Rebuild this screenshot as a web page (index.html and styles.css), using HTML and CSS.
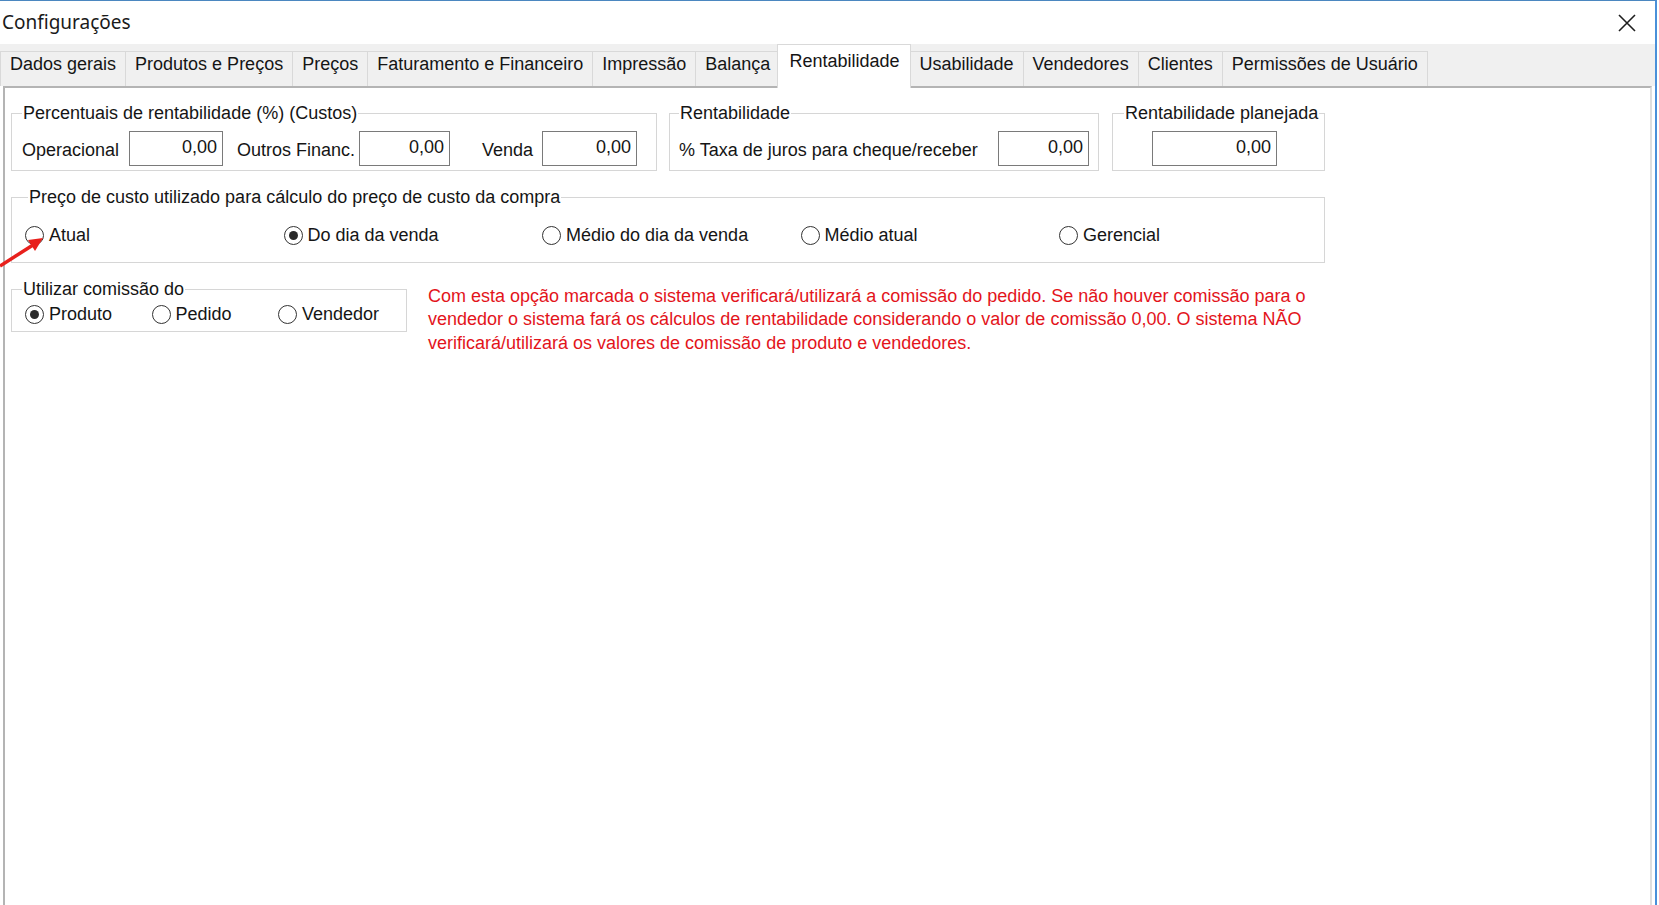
FILE: index.html
```html
<!DOCTYPE html>
<html lang="pt-BR">
<head>
    <meta charset="UTF-8">
    <title>Configurações</title>
    <link rel="stylesheet" href="styles.css">
</head>
<body>
    <div class="window">
        <header class="titlebar">
            <span class="title">Configurações</span>
            <svg class="close" width="18" height="18" viewBox="0 0 18 18">
                <path d="M1 1 L17 17 M17 1 L1 17" stroke="#1e1e1e" stroke-width="1.6" fill="none"/>
            </svg>
        </header>

        <nav class="tabs">
            <div class="tab">Dados gerais</div>
            <div class="tab">Produtos e Preços</div>
            <div class="tab">Preços</div>
            <div class="tab">Faturamento e Financeiro</div>
            <div class="tab">Impressão</div>
            <div class="tab">Balança</div>
            <div class="tab active">Rentabilidade</div>
            <div class="tab">Usabilidade</div>
            <div class="tab">Vendedores</div>
            <div class="tab">Clientes</div>
            <div class="tab">Permissões de Usuário</div>
        </nav>

        <main class="panel">
            <div class="row">
                <fieldset class="group g-custos">
                    <legend class="lg-custos">Percentuais de rentabilidade (%) (Custos)</legend>
                    <div class="fields">
                        <label class="lbl lbl-op">Operacional</label>
                        <input class="num w-op" type="text" value="0,00" readonly>
                        <label class="lbl lbl-out">Outros Financ.</label>
                        <input class="num w-out" type="text" value="0,00" readonly>
                        <label class="lbl lbl-venda">Venda</label>
                        <input class="num w-venda" type="text" value="0,00" readonly>
                    </div>
                </fieldset>

                <fieldset class="group g-rent">
                    <legend class="lg-rent">Rentabilidade</legend>
                    <div class="fields fields-rent">
                        <label class="lbl">% Taxa de juros para cheque/receber</label>
                        <input class="num w-taxa" type="text" value="0,00" readonly>
                    </div>
                </fieldset>

                <fieldset class="group g-plan">
                    <legend class="lg-plan">Rentabilidade planejada</legend>
                    <div class="fields fields-plan">
                        <input class="num w-plan" type="text" value="0,00" readonly>
                    </div>
                </fieldset>
            </div>

            <fieldset class="group g-preco">
                <legend class="lg-preco">Preço de custo utilizado para cálculo do preço de custo da compra</legend>
                <div class="radios radios-preco">
                    <div class="opt"><span class="radio"></span>Atual</div>
                    <div class="opt"><span class="radio on"></span>Do dia da venda</div>
                    <div class="opt"><span class="radio"></span>Médio do dia da venda</div>
                    <div class="opt"><span class="radio"></span>Médio atual</div>
                    <div class="opt"><span class="radio"></span>Gerencial</div>
                </div>
            </fieldset>

            <div class="row">
                <fieldset class="group g-comissao">
                    <legend class="lg-comissao">Utilizar comissão do</legend>
                    <div class="radios radios-comissao">
                        <div class="opt"><span class="radio on"></span>Produto</div>
                        <div class="opt"><span class="radio"></span>Pedido</div>
                        <div class="opt"><span class="radio"></span>Vendedor</div>
                    </div>
                </fieldset>
                <p class="aviso">Com esta opção marcada o sistema verificará/utilizará a comissão do pedido. Se não houver comissão para o<br>vendedor o sistema fará os cálculos de rentabilidade considerando o valor de comissão 0,00. O sistema NÃO<br>verificará/utilizará os valores de comissão de produto e vendedores.</p>
            </div>
        </main>

        <!-- seta vermelha apontando para "Atual" -->
        <svg class="arrow" width="50" height="40" viewBox="0 0 50 40">
            <line x1="0" y1="35" x2="33" y2="14" stroke="#e8201c" stroke-width="3.5"/>
            <polygon points="43,7 35,20 28,9" fill="#e8201c"/>
        </svg>
    </div>
</body>
</html>
```

FILE: styles.css
```css
body {
    margin: 0;
    background: #ffffff;
    font-family: "Liberation Sans", Arial, sans-serif;
    font-size: 18px;
    color: #151515;
}

.window {
    position: relative;
    width: 1657px;
    height: 905px;
    box-sizing: border-box;
    border-top: 1px solid #4b87c0;
    border-right: 2px solid #4a90d9;
    display: flex;
    flex-direction: column;
    overflow: hidden;
}

/* Title bar */
.titlebar {
    height: 43px;
    flex-shrink: 0;
    display: flex;
    justify-content: space-between;
    align-items: center;
    padding-left: 2px;
    padding-right: 19px;
    background: #ffffff;
}

.title {
    font-family: "Noto Sans", sans-serif;
    font-size: 19px;
    color: #1a1a1a;
    margin-top: -2px;
}

.close {
    display: block;
}

/* Tabs */
.tabs {
    height: 42px;
    flex-shrink: 0;
    background: #f0f0f0;
    display: flex;
    align-items: flex-end;
}

.tab {
    height: 35px;
    box-sizing: border-box;
    padding: 0 9px 10px;
    border: 1px solid #d9d9d9;
    border-bottom: none;
    margin-right: -1px;
    background: #f0f0f0;
    display: flex;
    align-items: center;
    white-space: nowrap;
}

.tab.active {
    position: relative;
    z-index: 2;
    height: 44px;
    margin: 0 -2px -2px -2px;
    padding: 0 11px 10px;
    background: #ffffff;
    border-color: #d9d9d9;
}

/* Panel */
.panel {
    flex: 1;
    margin: 0 3px 0 3px;
    border-top: 2px solid #b4b4b4;
    border-left: 2px solid #b4b4b4;
    border-right: 2px solid #dedede;
    background: #ffffff;
    padding: 14px 0 0 6px;
}

.row {
    display: flex;
    align-items: flex-start;
}

/* Group boxes */
.group {
    margin: 0;
    padding: 0;
    border: 1px solid #d6d6d6;
    box-sizing: border-box;
    min-width: 0;
}

.group legend {
    padding: 0 1px;
    line-height: 22px;
    white-space: nowrap;
}

.lg-custos { margin-left: 10px; }
.lg-rent { margin-left: 9px; }
.lg-plan { margin-left: 11px; }
.lg-preco { margin-left: 16px; }
.lg-comissao { margin-left: 10px; }

.g-custos { width: 646px; }
.g-rent { width: 430px; margin-left: 12px; }
.g-plan { width: 213px; margin-left: 13px; }
.g-preco { width: 1314px; margin-top: 15px; }
.g-comissao { width: 396px; margin-top: 15px; flex-shrink: 0; }

.fields {
    display: flex;
    align-items: center;
    padding: 7px 0 4px 10px;
}

.fields .lbl {
    padding-top: 3px;
}

.fields-rent {
    padding-left: 9px;
    padding-right: 9px;
}

.fields-rent .num {
    margin-left: auto;
}

.fields-plan {
    padding-left: 39px;
}

.lbl {
    white-space: nowrap;
}

.lbl-op { width: 107px; }
.lbl-out { width: 122px; margin-left: 14px; }
.lbl-venda { width: 60px; margin-left: 32px; }

.num {
    height: 35px;
    box-sizing: border-box;
    border: 1px solid #7a7a7a;
    background: #ffffff;
    font: inherit;
    color: #151515;
    text-align: right;
    padding: 0 5px 2px 0;
    margin: 0;
    outline: none;
}

.w-op { width: 94px; }
.w-out { width: 91px; }
.w-venda { width: 95px; }
.w-taxa { width: 91px; }
.w-plan { width: 125px; }

/* Radio buttons */
.radios {
    display: grid;
    padding-left: 13px;
}

.radios-preco {
    grid-template-columns: repeat(5, 258.5px);
    padding-top: 15px;
    padding-bottom: 15px;
}

.radios-comissao {
    grid-template-columns: repeat(3, 126.5px);
    padding-top: 2px;
    padding-bottom: 5px;
}

.opt {
    height: 24px;
    display: flex;
    align-items: center;
    gap: 5px;
    white-space: nowrap;
}

.radio {
    width: 19px;
    height: 19px;
    box-sizing: border-box;
    border: 1.5px solid #333333;
    border-radius: 50%;
    background: #ffffff;
    display: flex;
    align-items: center;
    justify-content: center;
    flex-shrink: 0;
}

.radio.on::after {
    content: "";
    width: 9px;
    height: 9px;
    border-radius: 50%;
    background: #2a2a2a;
}

/* Red warning */
.aviso {
    margin: 22px 0 0 21px;
    color: #e3141b;
    line-height: 23.3px;
    white-space: nowrap;
}

/* Arrow overlay */
.arrow {
    position: absolute;
    left: 0;
    top: 230px;
}
```
